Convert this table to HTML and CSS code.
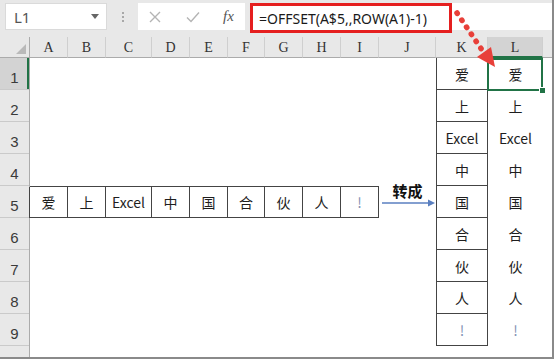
FILE: index.html
```html
<!DOCTYPE html>
<html lang="zh">
<head>
<meta charset="utf-8">
<link rel="stylesheet" href="styles.css">
</head>
<body>
<div class="window">
  <div class="toolbar">
    <div class="namebox">
      <span class="name">L1</span>
      <svg class="dd" width="8" height="5" viewBox="0 0 8 5"><path d="M0 0h8L4 5z" fill="#666"/></svg>
    </div>
    <div class="grip"><i></i><i></i><i></i></div>
    <div class="fxbox">
      <svg class="ico" width="12" height="12" viewBox="0 0 12 12"><path d="M1 1L11 11M11 1L1 11" stroke="#b4b4b4" stroke-width="1.4" fill="none"/></svg>
      <svg class="ico" width="14" height="12" viewBox="0 0 14 12"><path d="M1 6.5L5 10.5L13 1.5" stroke="#b4b4b4" stroke-width="1.4" fill="none"/></svg>
      <span class="fx">fx</span>
    </div>
    <div class="formula">
      <div class="redbox">=OFFSET(A$5,,ROW(A1)-1)</div>
    </div>
  </div>

  <div class="colheads">
    <div class="corner"><svg width="10" height="10" viewBox="0 0 10 10"><path d="M10 0V10H0z" fill="#b9b9b9"/></svg></div>
    <div class="ch">A</div><div class="ch">B</div><div class="ch">C</div><div class="ch">D</div>
    <div class="ch">E</div><div class="ch">F</div><div class="ch">G</div><div class="ch">H</div>
    <div class="ch">I</div><div class="ch">J</div><div class="ch">K</div><div class="ch ch-sel">L</div>
    <div class="ch ch-end"></div>
  </div>

  <div class="body">
    <div class="rowheads">
      <div class="rh rh-sel">1</div><div class="rh">2</div><div class="rh">3</div>
      <div class="rh">4</div><div class="rh">5</div><div class="rh">6</div>
      <div class="rh">7</div><div class="rh">8</div><div class="rh">9</div>
      <div class="rh rh-last"></div>
    </div>

    <div class="hstrip">
      <div class="c">爱</div><div class="c">上</div><div class="c">Excel</div>
      <div class="c">中</div><div class="c">国</div><div class="c">合</div>
      <div class="c">伙</div><div class="c">人</div><div class="c bang">!</div>
    </div>

    <div class="conv">
      <span class="convtxt">转成</span>
      <svg width="54" height="8" viewBox="0 0 54 8"><path d="M0 4H47" stroke="#5a7fc0" stroke-width="1.5"/><path d="M46 0.5L53 4L46 7.5z" fill="#5a7fc0"/></svg>
    </div>

    <div class="vstrip">
      <div class="v">爱</div><div class="v">上</div><div class="v">Excel</div>
      <div class="v">中</div><div class="v">国</div><div class="v">合</div>
      <div class="v">伙</div><div class="v">人</div><div class="v bang">!</div>
    </div>

    <div class="lstrip">
      <div class="l l-sel">爱<span class="sel"><span class="handle"></span></span></div>
      <div class="l">上</div><div class="l">Excel</div>
      <div class="l">中</div><div class="l">国</div><div class="l">合</div>
      <div class="l">伙</div><div class="l">人</div><div class="l bang">!</div>
    </div>
  </div>

  <svg class="redarrow" width="554" height="359" viewBox="0 0 554 359">
    <path d="M457 13L482 50" stroke="#e8403a" stroke-width="5.5" stroke-dasharray="0.5 8" stroke-linecap="round" fill="none"/>
    <path d="M495 67L477 57L491 47z" fill="#e8403a"/>
  </svg>
</div>
</body>
</html>
```

FILE: styles.css
```css
html, body {
  margin: 0;
  padding: 0;
  background: #fff;
}

.window {
  position: relative;
  width: 554px;
  height: 359px;
  box-sizing: border-box;
  border-right: 2px solid #8a8a8a;
  border-bottom: 2px solid #8a8a8a;
  overflow: hidden;
  font-family: "Noto Sans CJK SC", "Noto Sans", sans-serif;
  color: #1e1e1e;
}

/* ---------- toolbar ---------- */
.toolbar {
  height: 37px;
  box-sizing: border-box;
  background: #e8e8e8;
  display: flex;
  align-items: flex-start;
  padding: 3px 0 0 5px;
}

.namebox {
  width: 102px;
  height: 27px;
  box-sizing: border-box;
  background: #fff;
  border: 1px solid #dadada;
  display: flex;
  align-items: center;
  justify-content: space-between;
  padding: 0 7px 0 8px;
}

.name {
  font-family: "Noto Sans", "Liberation Sans", sans-serif;
  font-size: 15px;
  color: #555;
}

.grip {
  width: 31px;
  height: 27px;
  display: flex;
  flex-direction: column;
  align-items: center;
  justify-content: center;
  gap: 2px;
}

.grip i {
  width: 2px;
  height: 2px;
  background: #a8a8a8;
}

.fxbox {
  width: 107px;
  height: 27px;
  box-sizing: border-box;
  background: #fff;
  display: flex;
  align-items: center;
  padding-left: 11px;
}

.fxbox .ico:nth-child(2) {
  margin-left: 25px;
}

.fx {
  margin-left: 23px;
  font-family: "Liberation Serif", serif;
  font-style: italic;
  font-size: 15px;
  color: #555;
}

.formula {
  flex: 1;
  height: 27px;
  margin-left: 5px;
  background: #fff;
  position: relative;
}

.redbox {
  width: 202px;
  height: 30px;
  box-sizing: border-box;
  border: 3px solid #e51f1f;
  display: flex;
  align-items: center;
  padding-left: 6px;
  font-family: "Noto Sans", sans-serif;
  font-size: 14px;
  color: #1a1a1a;
  white-space: nowrap;
}

/* ---------- column headers ---------- */
.colheads {
  display: grid;
  grid-template-columns: 30px 38px 38px 46px 38px 38px 37px 38px 38px 38px 57px 52px 55px 1fr;
  height: 21px;
  background: #e8e8e8;
}

.corner {
  border-right: 1px solid #ababab;
  border-bottom: 1px solid #ababab;
  display: flex;
  align-items: flex-end;
  justify-content: flex-end;
  padding: 0 3px 3px 0;
}

.ch {
  border-right: 1px solid #cfcfcf;
  border-bottom: 1px solid #ababab;
  display: flex;
  align-items: flex-end;
  justify-content: center;
  padding-bottom: 1px;
  font-family: "Liberation Serif", serif;
  font-size: 14px;
  line-height: 16px;
  color: #333;
}

.ch-sel {
  background: #d3d3d3;
  border-bottom: 2px solid #217346;
  padding-bottom: 0;
}

.ch-end {
  border-right: none;
}

/* ---------- body ---------- */
.body {
  display: grid;
  grid-template-columns: 30px 38px 38px 46px 38px 38px 37px 38px 38px 38px 57px 52px 55px 1fr;
  grid-template-rows: repeat(9, 32px) 1fr;
  height: 299px;
}

.rowheads {
  grid-column: 1;
  grid-row: 1 / -1;
  display: flex;
  flex-direction: column;
  background: #e8e8e8;
  border-right: 1px solid #ababab;
}

.rh {
  height: 32px;
  flex: none;
  box-sizing: border-box;
  border-bottom: 1px solid #cacaca;
  display: flex;
  align-items: flex-end;
  justify-content: center;
  padding-bottom: 3px;
  font-family: "Liberation Sans", sans-serif;
  font-size: 15px;
  line-height: 16px;
  color: #3a3a3a;
}

.rh-sel {
  background: #d3d3d3;
  box-shadow: inset -2px 0 0 #217346;
}

.rh-last {
  flex: 1;
  border-bottom: none;
}

.hstrip {
  grid-column: 2 / 11;
  grid-row: 5;
  display: grid;
  grid-template-columns: 38px 38px 46px 38px 38px 37px 38px 38px 38px;
  border-top: 1px solid #444;
  box-sizing: border-box;
}

.c {
  border-right: 1px solid #444;
  border-bottom: 1px solid #444;
  display: flex;
  align-items: center;
  justify-content: center;
  font-size: 14px;
}

.c:first-child {
  border-left: 1px solid #444;
  margin-left: -1px;
}

.conv {
  grid-column: 11;
  grid-row: 4 / 6;
  display: flex;
  flex-direction: column;
  justify-content: flex-end;
  align-items: center;
  padding-bottom: 11px;
  padding-left: 2px;
}

.convtxt {
  font-size: 15px;
  font-weight: bold;
  line-height: 16px;
  color: #111;
  margin-left: -2px;
}

.vstrip {
  grid-column: 12;
  grid-row: 1 / 10;
  display: flex;
  flex-direction: column;
  border-left: 1px solid #444;
}

.v {
  height: 32px;
  flex: none;
  box-sizing: border-box;
  border-right: 1px solid #444;
  border-bottom: 1px solid #444;
  display: flex;
  align-items: center;
  justify-content: center;
  font-size: 14px;
}

.lstrip {
  grid-column: 13;
  grid-row: 1 / 10;
  display: flex;
  flex-direction: column;
}

.l {
  height: 32px;
  flex: none;
  display: flex;
  align-items: center;
  justify-content: center;
  font-size: 14px;
}

.l-sel {
  position: relative;
}

.sel {
  position: absolute;
  left: -1px;
  top: 0;
  right: 0;
  bottom: -1px;
  border: 2px solid #217346;
}

.handle {
  position: absolute;
  right: -5px;
  bottom: -5px;
  width: 5px;
  height: 5px;
  background: #217346;
  border: 1px solid #fff;
}

.bang {
  color: #8493b5;
}

/* ---------- overlay arrow ---------- */
.redarrow {
  position: absolute;
  left: 0;
  top: 0;
  pointer-events: none;
}
```
